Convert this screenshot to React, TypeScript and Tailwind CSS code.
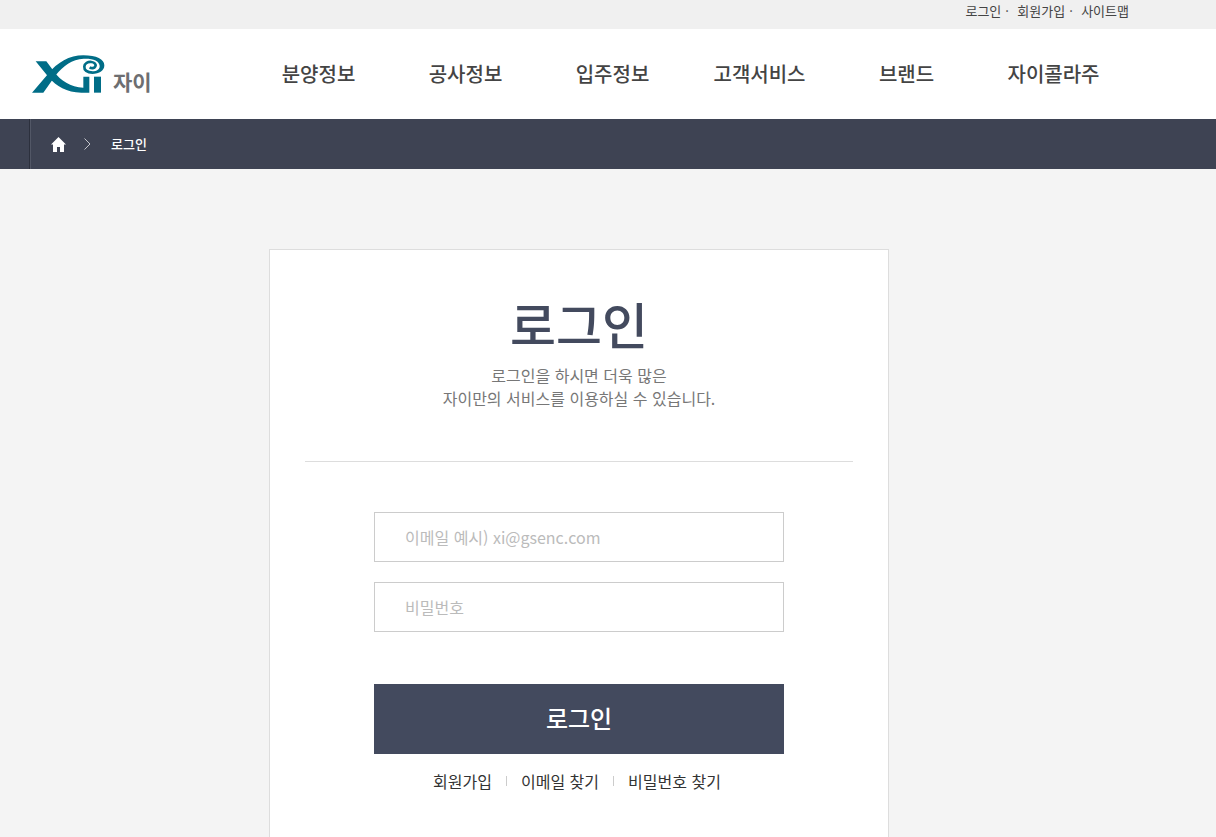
import { useState } from "react";
import type { FormEvent } from "react";

const utilLinks = ["로그인", "회원가입", "사이트맵"];
const menus = ["분양정보", "공사정보", "입주정보", "고객서비스", "브랜드", "자이콜라주"];
const helpLinks = ["회원가입", "이메일 찾기", "비밀번호 찾기"];

function Logo() {
  return (
    <a href="#" className="mt-[26px] flex w-[215px] shrink-0 pl-0.5" aria-label="자이">
      <svg viewBox="36 29 222 120" className="h-10 w-[74px] shrink-0" fill="#006d87">
        <path d="M36 142 L84 86 C112 51 148 30 190 30 C230 30 253 42 253 60 C253 76 239 86 216 86 L217 78 C231 78 240 71 239 61 C237 46 220 39 191 40 C156 41 129 62 107 90 L70 142 Z" />
        <path
          d="M218 82 C201 82 192 74 193 64 C194 54 204 49 214 50 C224 51 229 57 226 63 C223 69 215 70 209 66"
          fill="none"
          stroke="#006d87"
          strokeWidth="8"
        />
        <path d="M47 48 H79 L103 80 C121 105 152 126 190 127 V94 H208 V142 H184 C140 142 109 123 86 96 Z" />
        <path d="M222 94 H243 V142 H222 Z" />
      </svg>
      <span className="ml-[7px] mt-2.5 text-[21px] leading-8 font-bold text-[#6d6e71]">자이</span>
    </a>
  );
}

function Header() {
  return (
    <header className="bg-white">
      <div className="h-[29px] bg-[#f0f0f0] pr-[87px]">
        <ul className="flex justify-end text-[13px] leading-[22px] text-[#444]">
          {utilLinks.map((link, i) => (
            <li key={link} className="flex">
              {i > 0 && <span className="w-4 pl-1">·</span>}
              <a href="#">{link}</a>
            </li>
          ))}
        </ul>
      </div>
      <div className="flex h-[90px] pr-[89px] pl-[30px]">
        <Logo />
        <nav className="flex-1">
          <ul className="grid grid-cols-6 text-center text-xl leading-[90px] font-medium text-[#444]">
            {menus.map((menu) => (
              <li key={menu}>
                <a href="#">{menu}</a>
              </li>
            ))}
          </ul>
        </nav>
      </div>
    </header>
  );
}

function Breadcrumb() {
  return (
    <div className="h-[50px] bg-[#3e4353] pl-[29px]">
      <div className="flex h-full items-center border-l border-[#2c303d]">
        <div className="flex h-full items-center border-l border-[#525766] pl-5">
          <a href="#" aria-label="홈">
            <svg viewBox="0 0 15 15" className="h-[15px] w-[15px]" fill="#fff">
              <path d="M7.5 0 L15 7.5 H13 V15 H9 V10 H6 V15 H2 V7.5 H0 Z" />
            </svg>
          </a>
          <svg viewBox="0 0 7 12" className="ml-[18px] h-3 w-[7px]" fill="none" stroke="#c3c5cb">
            <path d="M0.5 0.5 L6 6 L0.5 11.5" />
          </svg>
          <span className="ml-5 text-[13px] font-medium text-white">로그인</span>
        </div>
      </div>
    </div>
  );
}

function LoginForm() {
  const [email, setEmail] = useState("");
  const [password, setPassword] = useState("");

  const onSubmit = (e: FormEvent) => {
    e.preventDefault();
  };

  const inputStyle =
    "block h-[50px] w-full border border-[#ccc] bg-white px-[30px] text-base text-[#333] outline-none placeholder:text-[#bbb]";

  return (
    <form onSubmit={onSubmit} className="mx-auto mt-[50px] max-w-[410px]">
      <input
        type="email"
        aria-label="이메일"
        placeholder="이메일 예시) xi@gsenc.com"
        value={email}
        onChange={(e) => setEmail(e.target.value)}
        className={inputStyle}
      />
      <input
        type="password"
        aria-label="비밀번호"
        placeholder="비밀번호"
        value={password}
        onChange={(e) => setPassword(e.target.value)}
        className={`mt-5 ${inputStyle}`}
      />
      <button type="submit" className="mt-[52px] h-[70px] w-full bg-[#434a5e] pb-0.5 text-2xl font-medium text-white">
        로그인
      </button>
      <ul className="mt-4 flex justify-center pr-1 text-base leading-[22px] text-[#333]">
        {helpLinks.map((link, i) => (
          <li key={link} className="flex items-center">
            {i > 0 && <span className="mx-3.5 h-2.5 w-px bg-[#ccc]" />}
            <a href="#">{link}</a>
          </li>
        ))}
      </ul>
    </form>
  );
}

export default function App() {
  return (
    <div lang="ko" className="min-h-screen bg-[#f4f4f4] font-['Noto_Sans_CJK_KR',sans-serif]">
      <Header />
      <Breadcrumb />
      <main className="pt-20 pr-[88px] pl-[30px]">
        <section className="mx-auto max-w-[620px] border border-[#ddd] bg-white px-[35px] pt-10 pb-20">
          <div className="border-b border-[#ddd] pb-[51px] text-center">
            <h1 className="mb-2 text-[50px] leading-[66px] font-medium text-[#434a5e]">로그인</h1>
            <p className="text-base leading-[23px] text-[#777]">
              로그인을 하시면 더욱 많은
              <br />
              자이만의 서비스를 이용하실 수 있습니다.
            </p>
          </div>
          <LoginForm />
        </section>
      </main>
    </div>
  );
}
